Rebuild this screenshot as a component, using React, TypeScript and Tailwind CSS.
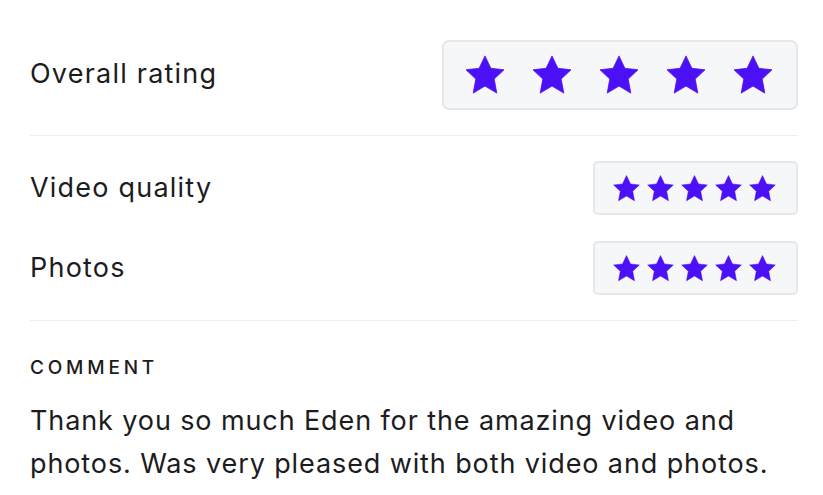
import React from "react";

const Star = ({ size }: { size: number }) => (
  <svg width={size} height={size} viewBox="2 2 20 19.1" className="block">
    <polygon
      points="12,2 14.94,8.2 21.5,8.95 16.6,13.55 17.9,20.6 12,17.1 6.1,20.6 7.4,13.55 2.5,8.95 9.06,8.2"
      fill="#4c10f6"
      stroke="#4c10f6"
      strokeWidth="0.4"
      strokeLinejoin="round"
    />
  </svg>
);

const SmallBox = () => (
  <div className="flex h-[54px] w-[205px] items-center gap-[7px] rounded-[5px] border-2 border-[#e6e7e9] bg-[#f6f7f9] pl-[18px]">
    {[0, 1, 2, 3, 4].map((i) => (
      <Star key={i} size={27} />
    ))}
  </div>
);

export default function App() {
  return (
    <div
      className="min-h-[495px] w-[823px] bg-white pl-[30px] pr-[25px] pt-[40px] text-[#1c1c1e]"
      style={{ fontFamily: "Inter, 'Noto Sans', sans-serif" }}
    >
      <div className="flex h-[70px] items-center justify-between">
        <span className="pb-[3px] text-[27px] leading-none tracking-[0.045em]">Overall rating</span>
        <div className="flex h-[70px] w-[356px] items-center gap-[27px] rounded-[7px] border-2 border-[#e6e7e9] bg-[#f6f7f9] pl-[21px]">
          {[0, 1, 2, 3, 4].map((i) => (
            <Star key={i} size={40} />
          ))}
        </div>
      </div>
      <div className="mt-[25px] h-px bg-[#eeeff1]" />
      <div className="mt-[25px] flex items-center justify-between">
        <span className="pb-[2px] text-[27px] leading-none tracking-[0.045em]">Video quality</span>
        <SmallBox />
      </div>
      <div className="mt-[26px] flex items-center justify-between">
        <span className="pb-[2px] text-[27px] leading-none tracking-[0.045em]">Photos</span>
        <SmallBox />
      </div>
      <div className="mt-[25px] h-px bg-[#eeeff1]" />
      <div className="mt-[37px] text-[19px] font-medium leading-none tracking-[0.2em]">COMMENT</div>
      <p className="mt-[22px] w-[760px] text-[27px] leading-[43px] tracking-[0.033em]">
        Thank you so much Eden for the amazing video and photos. Was very pleased with both video and photos.
      </p>
    </div>
  );
}
